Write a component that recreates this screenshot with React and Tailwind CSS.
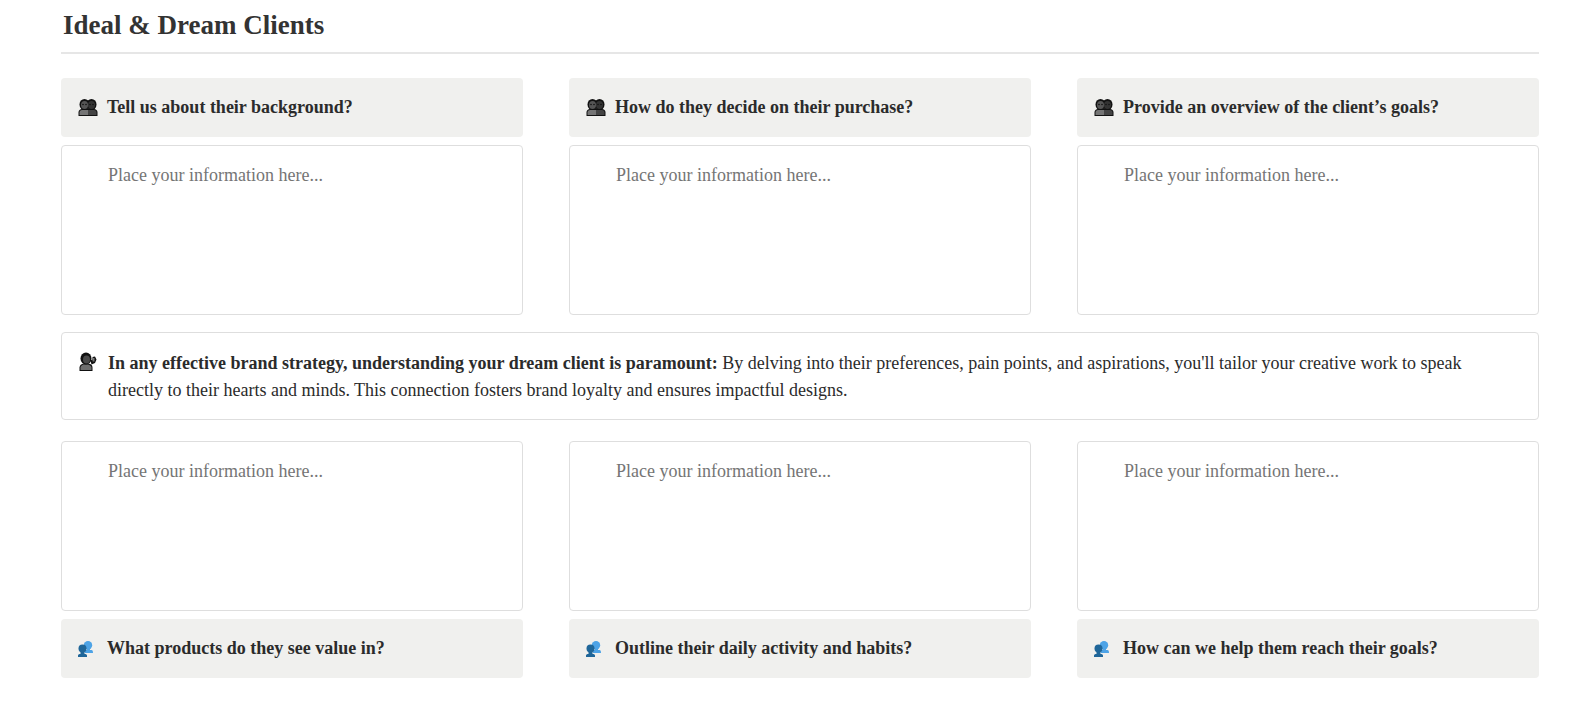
const serif = 'font-["Liberation_Serif",serif]';

function DarkPeople() {
  return (
    <svg width="20" height="17" viewBox="0 0 20 17" className="shrink-0">
      <path d="M.5 17v-3.500c0-2 1.500-3.500 3.500-3.500h12c2 0 3.500 1.500 3.500 3.500V17z" fill="#111" />
      <path d="M1.500 16v-2.500c0-1.400 1-2.500 2.500-2.500h6v5z" fill="#757575" />
      <path d="M10 16v-5h6c1.500 0 2.500 1.100 2.500 2.500V16z" fill="#444" />
      <ellipse cx="6.500" cy="5.500" rx="5" ry="5.500" fill="#111" />
      <ellipse cx="13.500" cy="5.500" rx="5" ry="5.500" fill="#111" />
      <ellipse cx="6.500" cy="6" rx="3.500" ry="4" fill="#555" />
      <ellipse cx="13.500" cy="6" rx="3.500" ry="4" fill="#333" />
      <circle cx="5" cy="5.500" r=".8" fill="#111" />
      <circle cx="8" cy="5.500" r=".8" fill="#111" />
      <circle cx="12" cy="5.500" r=".8" fill="#111" />
      <circle cx="15" cy="5.500" r=".8" fill="#111" />
    </svg>
  );
}

function Speaker() {
  return (
    <svg width="18" height="19" viewBox="0 0 18 19" className="shrink-0">
      <path d="M.5 19v-3.500c0-2.500 2-3.500 4-4h5c2.500.5 4 1.500 4 4V19z" fill="#111" />
      <path d="M1.500 18v-2.500c0-1.500 1.500-2.500 3-3h4.500c1.800.5 3.500 1.500 3.500 3V18z" fill="#6e6e6e" />
      <ellipse cx="7" cy="6.500" rx="5.500" ry="6" fill="#111" />
      <ellipse cx="7.500" cy="7.500" rx="3.500" ry="4" fill="#4a4a4a" />
      <path d="M11.500 8.500l2-1V5l2.500-.5 1.500 3-1.500 3.500-3.500 1.500z" fill="#111" />
      <rect x="13.500" y="6" width="2" height="3.500" fill="#777" />
    </svg>
  );
}

function BluePeople() {
  return (
    <svg width="15" height="16" viewBox="0 0 15 16" className="shrink-0">
      <circle cx="10" cy="4.200" r="4.200" fill="#4da3e6" />
      <path d="M7 12v-3h2V7h3v2h1.500c1 0 1.500 1.200 1.500 3z" fill="#4da3e6" />
      <circle cx="4.500" cy="7.500" r="4" fill="#1f6699" />
      <path d="M0 16v-1.500c0-1 1-1.500 2.500-1.500V11h4v2C8 13 9 13.500 9 14.500V16z" fill="#1f6699" />
    </svg>
  );
}

function Heading({ icon, text }) {
  return (
    <div className="flex h-[59px] items-center rounded bg-[#f0f0ee] pl-[17px]">
      <div className="flex w-[29px] shrink-0 items-center">{icon}</div>
      <h3 className="text-[18px] font-bold text-[#2b2b2b]">{text}</h3>
    </div>
  );
}

function Field() {
  return (
    <textarea
      readOnly
      placeholder="Place your information here..."
      className="block h-[170px] w-full resize-none rounded border border-[#dedede] bg-white pl-[46px] pt-[17px] text-[18px] leading-[24px] outline-none placeholder:text-[#757575]"
    />
  );
}

const top = [
  'Tell us about their background?',
  'How do they decide on their purchase?',
  'Provide an overview of the client’s goals?',
];

const bottom = [
  'What products do they see value in?',
  'Outline their daily activity and habits?',
  'How can we help them reach their goals?',
];

export default function App() {
  return (
    <div className={`${serif} min-h-screen bg-white pl-[61px] pr-[45px] text-[#2b2b2b]`}>
      <h1 className="border-b-2 border-[#e6e6e6] pb-[10px] pl-[2px] pt-[9px] text-[27px] font-bold leading-[33px] text-[#333]">
        Ideal &amp; Dream Clients
      </h1>

      {/* top row */}
      <div className="mt-[24px] grid grid-cols-3 gap-x-[46px] gap-y-[8px]">
        {top.map((t) => (
          <Heading key={t} icon={<DarkPeople />} text={t} />
        ))}
        {top.map((t) => (
          <Field key={t} />
        ))}
      </div>

      <div className="mt-[17px] flex h-[88px] rounded border border-[#dedede] pl-[17px] pt-[17px] text-[18px] leading-[27px]">
        <div className="w-[29px] shrink-0 pt-[2px]">
          <Speaker />
        </div>
        <p className="w-[1362px]">
          <b>In any effective brand strategy, understanding your dream client is paramount:</b> By delving into their
          preferences, pain points, and aspirations, you'll tailor your creative work to speak directly to their hearts
          and minds. This connection fosters brand loyalty and ensures impactful designs.
        </p>
      </div>

      {/* bottom row */}
      <div className="mt-[21px] grid grid-cols-3 gap-x-[46px] gap-y-[8px]">
        {bottom.map((t) => (
          <Field key={t} />
        ))}
        {bottom.map((t) => (
          <Heading key={t} icon={<BluePeople />} text={t} />
        ))}
      </div>
    </div>
  );
}
